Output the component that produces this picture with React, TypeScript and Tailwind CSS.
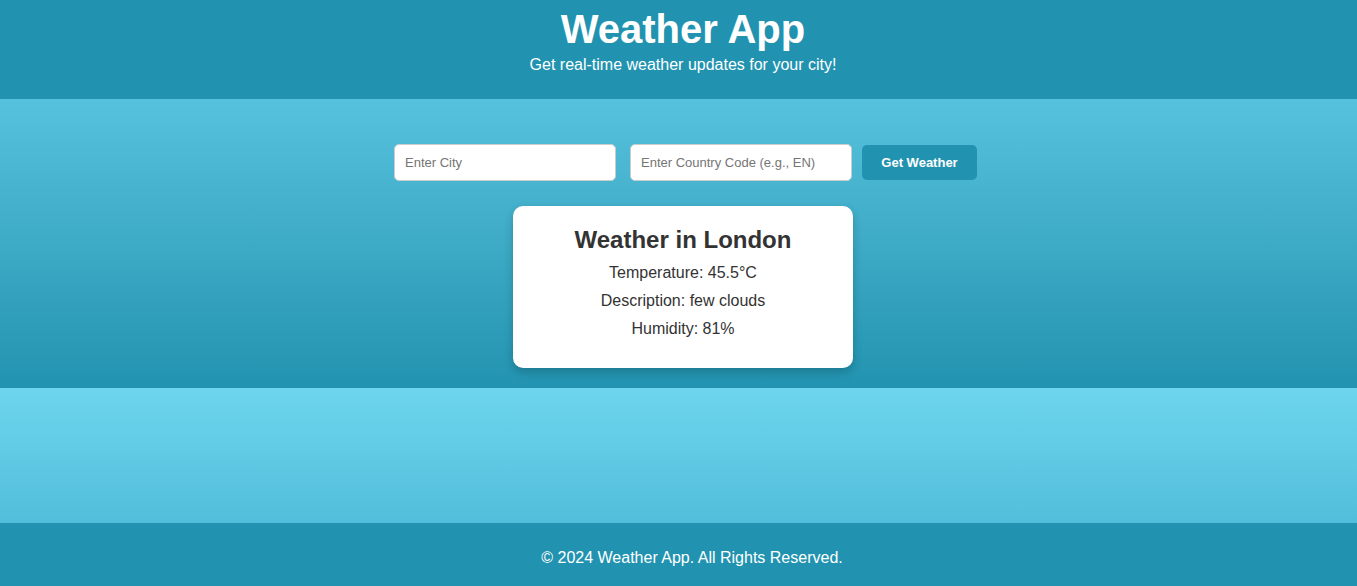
import React, { useState } from 'react';

const WeatherApp = () => {
  const [city, setCity] = useState('');
  const [country, setCountry] = useState('');

  // Sample result shown under the search form
  const weather = {
    name: 'London',
    temp: '45.5',
    description: 'few clouds',
    humidity: 81,
  };

  return (
    <div className="min-h-[586px] flex flex-col font-['Liberation_Sans',Arial,sans-serif]">
      <header className="bg-[#2193b0] h-[99px] pt-[6px] pl-[9px] text-center text-white">
        <h1 className="text-[40px] leading-[46px] font-bold">Weather App</h1>
        <p className="text-[16px] leading-[18px] mt-[4px]">Get real-time weather updates for your city!</p>
      </header>

      <main className="bg-gradient-to-b from-[#56c2dd] to-[#2193b0] h-[289px] pt-[45px]">
        <div className="flex justify-center items-center pl-[14px]">
          <input
            type="text"
            value={city}
            onChange={(e) => setCity(e.target.value)}
            placeholder="Enter City"
            className="w-[222px] h-[37px] px-[10px] mr-[14px] bg-white border border-[#cccccc] rounded-[5px] text-[13px] text-[#333] placeholder:text-[#757575] outline-none"
          />
          <input
            type="text"
            value={country}
            onChange={(e) => setCountry(e.target.value)}
            placeholder="Enter Country Code (e.g., EN)"
            className="w-[222px] h-[37px] px-[10px] mr-[10px] bg-white border border-[#cccccc] rounded-[5px] text-[13px] text-[#333] placeholder:text-[#757575] outline-none"
          />
          <button className="w-[115px] h-[35px] bg-[#2193b0] text-white text-[13px] font-bold rounded-[5px]">
            Get Weather
          </button>
        </div>

        <div className="flex justify-center pl-[9px] mt-[25px]">
          <div className="w-[340px] h-[162px] bg-white rounded-[10px] shadow-[0_4px_10px_rgba(0,0,0,0.2)] pt-[20px] text-center text-[#333]">
            <h2 className="text-[24px] leading-[28px] font-bold">Weather in {weather.name}</h2>
            <p className="text-[16px] leading-[18px] mt-[10px]">Temperature: {weather.temp}°C</p>
            <p className="text-[16px] leading-[18px] mt-[10px]">Description: {weather.description}</p>
            <p className="text-[16px] leading-[18px] mt-[10px]">Humidity: {weather.humidity}%</p>
          </div>
        </div>
      </main>

      <div className="bg-gradient-to-b from-[#6dd5ed] to-[#52bedb] h-[135px]"></div>

      <footer className="bg-[#2193b0] h-[63px] flex items-center justify-center pl-[27px] pt-[6px] text-white">
        <p className="text-[16px] leading-[18px]">© 2024 Weather App. All Rights Reserved.</p>
      </footer>
    </div>
  );
};

export default WeatherApp;
